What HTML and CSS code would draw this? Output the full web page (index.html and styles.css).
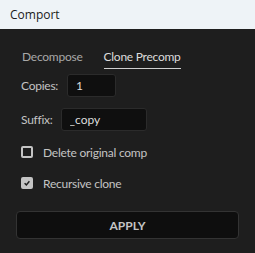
FILE: index.html
```html
<!DOCTYPE html>
<html>
<head>
    <title>Comport</title>
    <link rel="stylesheet" href="styles.css">
</head>
<body>
    <div class="titlebar">Comport</div>

    <div class="panel">
        <div class="tabs">
            <div class="tab">Decompose</div>
            <div class="tab active">Clone Precomp</div>
        </div>

        <div class="field">
            <label for="copies">Copies:</label>
            <input id="copies" class="copies-input" type="text" value="1">
        </div>

        <div class="field field-suffix">
            <label for="suffix">Suffix:</label>
            <input id="suffix" class="suffix-input" type="text" value="_copy">
        </div>

        <div class="check-row">
            <span class="box"></span>
            <span>Delete original comp</span>
        </div>

        <div class="check-row check-second">
            <span class="box checked">
                <svg width="10" height="10" viewBox="0 0 10 10"><path d="M2 5.2 L4.2 7.3 L8 2.8" fill="none" stroke="#1e1e1e" stroke-width="1.8"/></svg>
            </span>
            <span>Recursive clone</span>
        </div>

        <button class="apply-btn">APPLY</button>
    </div>
</body>
</html>
```

FILE: styles.css
```css
body {
    margin: 0;
    background-color: #1e1e1e;
    font-family: Lato, "Open Sans", sans-serif;
    font-size: 12px;
    letter-spacing: -0.25px;
    color: #c4c4c4;
}

.titlebar {
    height: 29px;
    background: #eef3f7;
    color: #1a1a1a;
    font-family: "Open Sans", sans-serif;
    font-size: 12px;
    letter-spacing: 0;
    display: flex;
    align-items: center;
    padding-left: 10px;
}

.panel {
    padding: 20px 16px 14px;
}

.tabs {
    display: flex;
    gap: 21px;
    margin-left: 6px;
}

.tab {
    line-height: 16px;
    padding-bottom: 3px;
    color: #a8a8a8;
}

.tab.active {
    color: #dcdcdc;
    border-bottom: 1px solid #cfcfcf;
}

.field {
    display: flex;
    align-items: center;
    gap: 9px;
    margin-top: 5px;
    margin-left: 5px;
}

.field-suffix {
    gap: 8px;
    margin-top: 11px;
}

.field input {
    height: 23px;
    box-sizing: border-box;
    background: #0f0f0f;
    border: 1px solid #2b2b2b;
    border-radius: 3px;
    color: #dcdcdc;
    font-family: inherit;
    font-size: 12px;
    padding: 0 8px;
    outline: none;
}

.copies-input {
    width: 49px;
}

.suffix-input {
    width: 86px;
}

.check-row {
    display: flex;
    align-items: center;
    gap: 10px;
    height: 16px;
    margin-top: 13px;
    margin-left: 5px;
}

.check-second {
    margin-top: 15px;
}

.box {
    width: 12px;
    height: 12px;
    box-sizing: border-box;
    border: 2px solid #c4c4c4;
    border-radius: 2px;
    display: flex;
    align-items: center;
    justify-content: center;
}

.box.checked {
    background: #c4c4c4;
}

.apply-btn {
    display: block;
    width: 100%;
    height: 28px;
    margin-top: 20px;
    background: #0e0e0e;
    border: 1px solid #333;
    border-radius: 4px;
    color: #c4c4c4;
    font-family: inherit;
    font-size: 12px;
    font-weight: bold;
    letter-spacing: 0;
}
```
